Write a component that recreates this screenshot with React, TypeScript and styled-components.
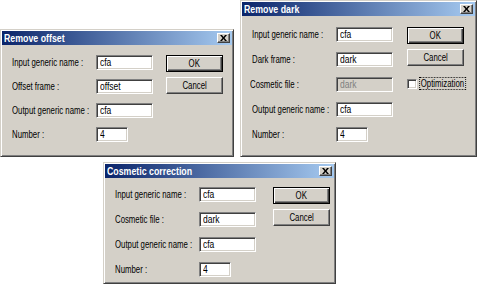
import styled, { createGlobalStyle } from "styled-components";

const GlobalStyle = createGlobalStyle`
    html, body {
        margin: 0;
        padding: 0;
        background: #ffffff;
    }

    body {
        width: 477px;
        height: 287px;
        overflow: hidden;
        font-family: "Liberation Sans", Arial, sans-serif;
        font-size: 10px;
        color: #000000;
    }
`;

const Desktop = styled.div`
    display: flex;
    flex-direction: column;
    gap: 5px;
    width: 477px;
    height: 287px;
`;

const TopRow = styled.div`
    display: flex;
    align-items: flex-start;
    gap: 6px;
`;

const BottomRow = styled.div`
    display: flex;
    padding-left: 103px;
`;

// the old dialog font is a narrow one, so squeeze the text sideways
const Narrow = styled.span<{ $scale?: number; $origin?: string }>`
    display: inline-block;
    white-space: nowrap;
    transform: scaleX(${(p) => p.$scale ?? 0.78});
    transform-origin: ${(p) => p.$origin || "left"} center;
`;

const Window = styled.div<{ $w: number; $h: number; $top?: number }>`
    box-sizing: border-box;
    width: ${(p) => p.$w}px;
    height: ${(p) => p.$h}px;
    margin-top: ${(p) => p.$top || 0}px;
    padding: 1px;
    display: flex;
    flex-direction: column;
    background: #d4d0c8;
    border: 1px solid;
    border-color: #d4d0c8 #404040 #404040 #d4d0c8;
    box-shadow: inset 1px 1px #ffffff, inset -1px -1px #808080;
`;

const TitleBar = styled.div`
    height: 14px;
    display: flex;
    align-items: center;
    justify-content: space-between;
    padding: 0 2px 0 2px;
    background: linear-gradient(to right, #0a246a, #a6caf0);
    color: #ffffff;
    font-weight: bold;
    font-size: 10px;
`;

const CloseButton = styled.div`
    box-sizing: border-box;
    width: 13px;
    height: 10px;
    display: flex;
    align-items: center;
    justify-content: center;
    background: #d4d0c8;
    border: 1px solid;
    border-color: #ffffff #404040 #404040 #ffffff;
    box-shadow: inset -1px -1px #808080;
`;

const Body = styled.div<{ $top: number }>`
    display: flex;
    align-items: flex-start;
    padding: ${(p) => p.$top}px 0 0 10px;
`;

const Form = styled.div<{ $gap: number }>`
    display: flex;
    flex-direction: column;
    gap: ${(p) => p.$gap}px;
`;

const Row = styled.div`
    display: flex;
    align-items: center;
    height: 15px;
`;

const Label = styled.span<{ $shift?: number }>`
    flex: none;
    width: 84px;
    margin-left: ${(p) => p.$shift || 0}px;
    margin-right: ${(p) => -(p.$shift || 0)}px;
`;

const Field = styled.div<{ $w: number; $disabled?: boolean }>`
    box-sizing: border-box;
    flex: none;
    width: ${(p) => p.$w}px;
    height: 15px;
    padding: 1px 0 0 3px;
    line-height: 12px;
    background: ${(p) => (p.$disabled ? "#d4d0c8" : "#ffffff")};
    color: ${(p) => (p.$disabled ? "#808080" : "#000000")};
    border: 1px solid;
    border-color: #808080 #ffffff #ffffff #808080;
    box-shadow: inset 1px 1px #404040, inset -1px -1px #d4d0c8;
`;

const Side = styled.div<{ $left: number }>`
    display: flex;
    flex-direction: column;
    gap: 5px;
    margin-left: ${(p) => p.$left}px;
`;

const Button = styled.div<{ $default?: boolean }>`
    box-sizing: border-box;
    width: 57px;
    height: 17px;
    display: flex;
    align-items: center;
    justify-content: center;
    background: #d4d0c8;
    border: 1px solid;
    border-color: ${(p) =>
        p.$default ? "#000000" : "#ffffff #404040 #404040 #ffffff"};
    box-shadow: ${(p) =>
        p.$default
            ? "inset 1px 1px #ffffff, inset -1px -1px #404040, inset -2px -2px #808080"
            : "inset -1px -1px #808080"};
`;

const CheckRow = styled.div`
    display: flex;
    align-items: center;
    gap: 3px;
    margin-top: 7px;
`;

const CheckBox = styled.div`
    box-sizing: border-box;
    flex: none;
    width: 10px;
    height: 10px;
    background: #ffffff;
    border: 1px solid;
    border-color: #808080 #ffffff #ffffff #808080;
    box-shadow: inset 1px 1px #404040, inset -1px -1px #d4d0c8;
`;

const FocusText = styled(Narrow)`
    padding: 0 1px;
    line-height: 11px;
    outline: 1px dotted #000000;
`;

const CloseIcon = () => (
    <svg width="7" height="6" viewBox="0 0 7 6">
        <path
            d="M0 0h2l1.5 2L5 0h2L4.5 3 7 6H5L3.5 4 2 6H0l2.5-3z"
            fill="#000000"
        />
    </svg>
);

type FieldRow = {
    label: string;
    value: string;
    w?: number;
    disabled?: boolean;
    shift?: number;
};

const Dialog = ({
    title,
    rows,
    w,
    h,
    top,
    bodyTop,
    gap,
    sideLeft,
    withOption,
}: {
    title: string;
    rows: FieldRow[];
    w: number;
    h: number;
    top?: number;
    bodyTop: number;
    gap: number;
    sideLeft: number;
    withOption?: boolean;
}) => (
    <Window $w={w} $h={h} $top={top}>
        <TitleBar>
            <Narrow $scale={0.88}>{title}</Narrow>
            <CloseButton>
                <CloseIcon />
            </CloseButton>
        </TitleBar>
        <Body $top={bodyTop}>
            <Form $gap={gap}>
                {rows.map((row, i) => (
                    <Row key={`row${i}`}>
                        <Label $shift={row.shift}>
                            <Narrow>{row.label}</Narrow>
                        </Label>
                        <Field $w={row.w || 57} $disabled={row.disabled}>
                            <Narrow $scale={0.85}>{row.value}</Narrow>
                        </Field>
                    </Row>
                ))}
            </Form>
            <Side $left={sideLeft}>
                <Button $default>
                    <Narrow $origin="center">OK</Narrow>
                </Button>
                <Button>
                    <Narrow $origin="center">Cancel</Narrow>
                </Button>
                {withOption && (
                    <CheckRow>
                        <CheckBox />
                        <FocusText>Optimization</FocusText>
                    </CheckRow>
                )}
            </Side>
        </Body>
    </Window>
);

export default function App() {
    return (
        <>
            <GlobalStyle />
            <Desktop>
                <TopRow>
                    <Dialog
                        title="Remove offset"
                        w={234}
                        h={128}
                        top={29}
                        bodyTop={10}
                        gap={9}
                        sideLeft={13}
                        rows={[
                            { label: "Input generic name :", value: "cfa" },
                            { label: "Offset frame :", value: "offset" },
                            { label: "Output generic name :", value: "cfa" },
                            { label: "Number :", value: "4", w: 32 },
                        ]}
                    />
                    <Dialog
                        title="Remove dark"
                        w={237}
                        h={157}
                        bodyTop={11}
                        gap={10}
                        sideLeft={14}
                        withOption
                        rows={[
                            { label: "Input generic name :", value: "cfa" },
                            { label: "Dark frame :", value: "dark" },
                            {
                                label: "Cosmetic file :",
                                value: "dark",
                                disabled: true,
                                shift: -2,
                            },
                            { label: "Output generic name :", value: "cfa" },
                            { label: "Number :", value: "4", w: 32 },
                        ]}
                    />
                </TopRow>
                <BottomRow>
                    <Dialog
                        title="Cosmetic correction"
                        w={233}
                        h={122}
                        bodyTop={9}
                        gap={10}
                        sideLeft={17}
                        rows={[
                            { label: "Input generic name :", value: "cfa" },
                            { label: "Cosmetic file :", value: "dark" },
                            { label: "Output generic name :", value: "cfa" },
                            { label: "Number :", value: "4", w: 32 },
                        ]}
                    />
                </BottomRow>
            </Desktop>
        </>
    );
}
